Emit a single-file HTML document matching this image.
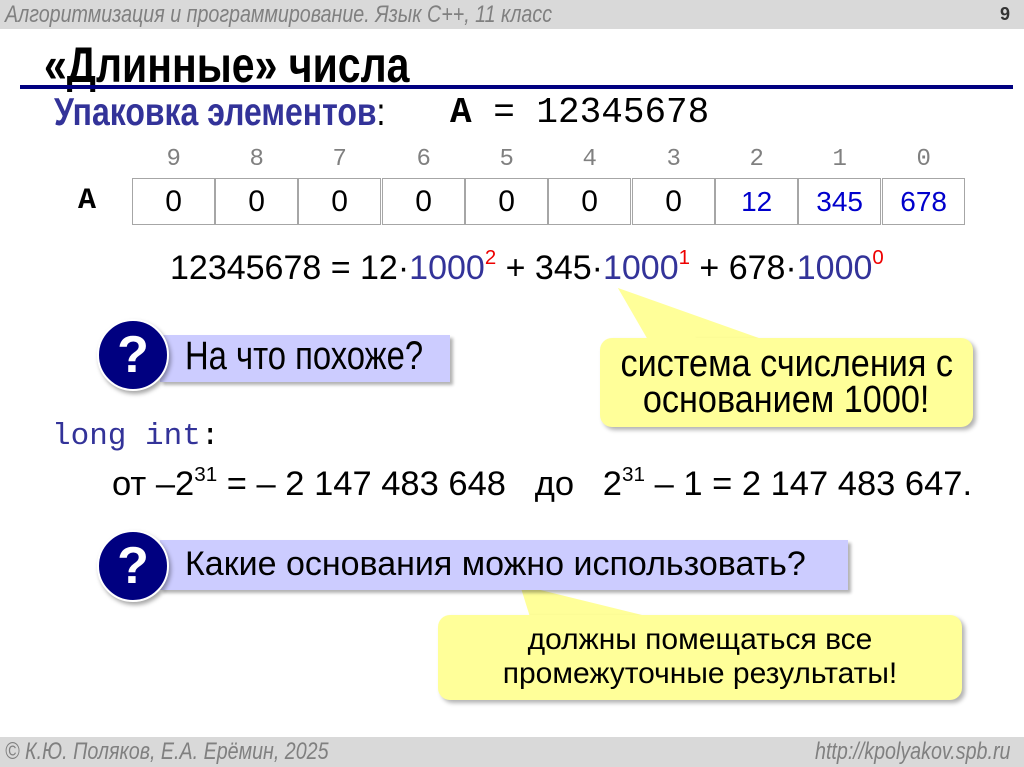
<!DOCTYPE html>
<html><head><meta charset="utf-8"><style>
*{margin:0;padding:0;box-sizing:border-box}
body{width:1024px;height:767px;position:relative;background:#fff;overflow:hidden;font-family:"Liberation Sans","Noto Sans CJK SC",sans-serif}
.a{position:absolute;white-space:nowrap}
.n{transform:scaleX(0.82);transform-origin:left center;display:inline-block}
.mono{font-family:"Liberation Mono",monospace}
.cell{position:absolute;top:178px;height:47px;width:83.3px;border:1px solid #a6a6a6;text-align:center;font-size:30px;line-height:45px;font-family:"Liberation Sans",sans-serif}
.idx{position:absolute;top:146px;width:83.3px;text-align:center;font-size:24px;color:#808080;font-family:"Liberation Mono",monospace}
.q{position:absolute;width:72px;height:72px;border-radius:50%;background:#000080;border:2px solid #fff;box-shadow:2px 3px 4px rgba(0,0,0,.35);color:#fff;font-weight:bold;font-size:52px;text-align:center;line-height:68px}
.qb{position:absolute;background:#ccccff;box-shadow:3px 3px 3px rgba(0,0,0,.3)}
.y{position:absolute;background:#ffff99;border-radius:12px;box-shadow:3px 3px 4px rgba(0,0,0,.3);text-align:center;font-size:34px;line-height:34px}
sup{font-size:60%;vertical-align:top;position:relative;top:-2px}
</style></head><body>
<div class="a" style="left:0;top:0;width:1024px;height:29px;background:#d9d9d9"></div>
<div class="a" style="left:5px;top:1px;font-size:24px;font-style:italic;color:#808080"><span class="n">Алгоритмизация и программирование. Язык C++, 11 класс</span></div>
<div class="a" style="left:1000px;top:4px;font-size:18px;font-weight:bold;color:#333">9</div>
<div class="a" style="left:44px;top:36px;font-size:50px;font-weight:bold"><span class="n">«Длинные» числа</span></div>
<div class="a" style="left:20px;top:85px;width:993px;height:4px;background:#000080"></div>
<div class="a" style="left:54px;top:91px;font-size:39px;font-weight:bold;color:#333399"><span class="n">Упаковка элементов<span style="font-weight:normal;color:#000">:</span></span></div>
<div class="a mono" style="left:450px;top:92px;font-size:36px;"><b>A</b> = 12345678</div>

<div class="idx" style="left:132px">9</div><div class="idx" style="left:215px">8</div><div class="idx" style="left:298px">7</div><div class="idx" style="left:382px">6</div><div class="idx" style="left:465px">5</div><div class="idx" style="left:548px">4</div><div class="idx" style="left:632px">3</div><div class="idx" style="left:715px">2</div><div class="idx" style="left:798px">1</div><div class="idx" style="left:882px">0</div>
<div class="a mono" style="left:78px;top:184px;font-size:30px;font-weight:bold">A</div>
<div class="cell" style="left:132px">0</div><div class="cell" style="left:215px">0</div><div class="cell" style="left:298px">0</div><div class="cell" style="left:382px">0</div><div class="cell" style="left:465px">0</div><div class="cell" style="left:548px">0</div><div class="cell" style="left:632px">0</div>
<div class="cell mono" style="left:715px;color:#0000cc;font-size:28px">12</div><div class="cell mono" style="left:798px;color:#0000cc;font-size:28px">345</div><div class="cell mono" style="left:882px;color:#0000cc;font-size:28px">678</div>

<div class="a" style="left:170px;top:249px;font-size:34px">12345678 = 12·<span style="color:#333399">1000</span><sup style="color:#e00">2</sup> + 345·<span style="color:#333399">1000</span><sup style="color:#e00">1</sup> + 678·<span style="color:#333399">1000</span><sup style="color:#e00">0</sup></div>

<svg class="a" style="left:0;top:0" width="1024" height="767"><polygon points="618,288 650,342 770,342" fill="#ffff99"/><polygon points="520,585 530,617 650,617" fill="#ffff99"/></svg>
<div class="y" style="left:600px;top:338px;width:373px;height:89px;padding-top:8px;font-size:38px;line-height:36px"><span class="n" style="transform:scaleX(0.9);transform-origin:center">система счисления с</span><br><span class="n" style="transform:scaleX(0.9);transform-origin:center">основанием 1000!</span></div>
<div class="y" style="left:438px;top:615px;width:524px;height:85px;padding-top:8px;font-size:30px">должны помещаться все<br>промежуточные результаты!</div>
<svg class="a" style="left:0;top:0" width="1024" height="767"><polygon points="618,288 648,340 700,340" fill="#ffff99"/><polygon points="520,585 532,613 600,613" fill="#ffff99"/></svg>

<div class="qb" style="left:160px;top:335px;width:290px;height:47px"></div>
<div class="a" style="left:185px;top:334px;font-size:40px"><span class="n">На что похоже?</span></div>
<div class="q" style="left:97px;top:319px">?</div>

<div class="a mono" style="left:52px;top:419px;font-size:31px;color:#333399">long int<span style="color:#000">:</span></div>
<div class="a" style="left:112px;top:465px;font-size:34.5px">от –2<sup>31</sup> = – 2 147 483 648 &nbsp; до &nbsp; 2<sup>31</sup> – 1 = 2 147 483 647.</div>

<div class="qb" style="left:160px;top:540px;width:688px;height:50px"></div>
<div class="a" style="left:185px;top:545px;font-size:34px">Какие основания можно использовать?</div>
<div class="q" style="left:97px;top:530px">?</div>

<div class="a" style="left:0;top:737px;width:1024px;height:30px;background:#d9d9d9"></div>
<div class="a" style="left:5px;top:738px;font-size:24px;font-style:italic;color:#808080"><span class="n">© К.Ю. Поляков, Е.А. Ерёмин, 2025</span></div>
<div class="a" style="left:815px;top:738px;font-size:24px;font-style:italic;color:#808080"><span class="n">http://kpolyakov.spb.ru</span></div>
</body></html>
